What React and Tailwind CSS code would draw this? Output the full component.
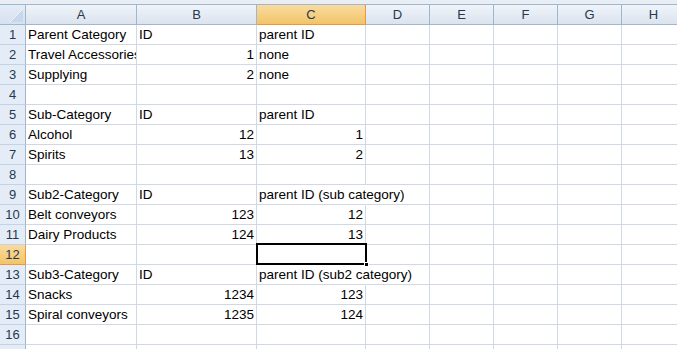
import React from 'react';

const cols = [
  { key: 'A', w: 'w-[111px]' },
  { key: 'B', w: 'w-[120px]' },
  { key: 'C', w: 'w-[109px]' },
  { key: 'D', w: 'w-[64px]' },
  { key: 'E', w: 'w-[64px]' },
  { key: 'F', w: 'w-[64px]' },
  { key: 'G', w: 'w-[64px]' },
  { key: 'H', w: 'w-[64px]' },
];

// [A, B, C] values; numbers get right-aligned
const rows = [
  ['Parent Category', 'ID', 'parent ID'],
  ['Travel Accessories', 1, 'none'],
  ['Supplying', 2, 'none'],
  [],
  ['Sub-Category', 'ID', 'parent ID'],
  ['Alcohol', 12, 1],
  ['Spirits', 13, 2],
  [],
  ['Sub2-Category', 'ID', 'parent ID (sub category)'],
  ['Belt conveyors', 123, 12],
  ['Dairy Products', 124, 13],
  [],
  ['Sub3-Category', 'ID', 'parent ID (sub2 category)'],
  ['Snacks', 1234, 123],
  ['Spiral conveyors', 1235, 124],
  [],
  [],
];

const Cell = ({ value, w, overflow, clip, hideRight }) => {
  const isNum = typeof value === 'number';
  return (
    <div
      className={`${w} h-[20px] shrink-0 border-r border-b border-[#d0d7e5] relative ${hideRight ? 'border-r-white' : ''} ${clip ? 'overflow-hidden' : ''}`}
    >
      {value !== undefined && (
        <div
          className={`absolute bottom-[1px] leading-[17px] whitespace-nowrap text-black ${isNum ? 'right-[2px]' : 'left-[2px]'} ${overflow ? 'z-10' : ''}`}
        >
          {value}
        </div>
      )}
    </div>
  );
};

export default function App() {
  return (
    <div
      className="w-[677px] h-[349px] overflow-hidden bg-white text-[13.5px] relative"
      style={{ fontFamily: '"Liberation Sans", Arial, sans-serif' }}
    >
      {/* top strip */}
      <div className="h-[5px] bg-[#e9eef5] border-b border-[#9eb6ce]" />

      {/* column headers */}
      <div className="flex h-[20px]">
        <div className="w-[26px] shrink-0 h-[20px] border-r border-b border-[#9eb6ce] bg-gradient-to-b from-[#e4ecf7] to-[#d6e1ef] relative">
          <svg className="absolute right-[2px] bottom-[2px]" width="13" height="13" viewBox="0 0 13 13">
            <polygon points="13,0 13,13 0,13" fill="#c8d8ea" />
            <polyline points="13,0 0,13" stroke="#eef3f9" strokeWidth="1" fill="none" />
          </svg>
        </div>
        {cols.map((c) =>
          c.key === 'C' ? (
            <div
              key={c.key}
              className={`${c.w} shrink-0 h-[20px] border-r border-b border-r-[#f29536] border-b-[#f29536] bg-gradient-to-b from-[#f9dba0] to-[#f2c468] flex items-center justify-center text-[#26384f] text-[13px]`}
            >
              {c.key}
            </div>
          ) : (
            <div
              key={c.key}
              className={`${c.w} shrink-0 h-[20px] border-r border-b border-[#9eb6ce] bg-gradient-to-b from-[#f0f4fa] to-[#dbe3ee] flex items-center justify-center text-[#26384f] text-[13px]`}
            >
              {c.key}
            </div>
          )
        )}
      </div>

      {/* rows */}
      {rows.map((r, i) => {
        const n = i + 1;
        const selected = n === 12;
        const longC = typeof r[2] === 'string' && r[2].length > 12;
        return (
          <div key={n} className="flex h-[20px]">
            <div
              className={`w-[26px] shrink-0 h-[20px] border-r border-b flex items-center justify-center text-[13px] ${
                selected
                  ? 'bg-gradient-to-b from-[#f9dba0] to-[#f2c468] border-r-[#f29536] border-b-[#f29536] text-[#26384f]'
                  : 'bg-[#e4ecf7] border-r-[#9eb6ce] border-b-[#c5d2e3] text-[#26384f]'
              }`}
            >
              {n < 17 ? n : ''}
            </div>
            <Cell value={r[0]} w={cols[0].w} clip={r[1] !== undefined} />
            <Cell value={r[1]} w={cols[1].w} />
            <Cell value={r[2]} w={cols[2].w} overflow={longC} hideRight={longC} />
            {cols.slice(3).map((c) => (
              <Cell key={c.key} w={c.w} />
            ))}
          </div>
        );
      })}

      {/* active cell C12 */}
      <div className="absolute left-[256px] top-[243px] w-[111px] h-[22px] border-2 border-black pointer-events-none">
        <div className="absolute right-[-4px] bottom-[-4px] w-[5px] h-[5px] bg-black border border-white" />
      </div>
    </div>
  );
}
